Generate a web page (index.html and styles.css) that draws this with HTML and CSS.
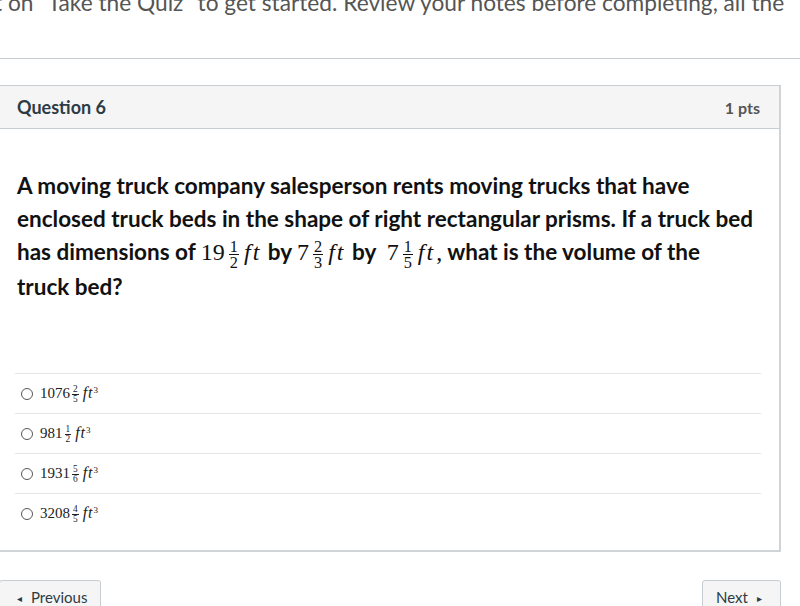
FILE: index.html
```html
<!DOCTYPE html>
<html>
<head>
<meta charset="utf-8">
<link rel="stylesheet" href="styles.css">
</head>
<body>
<div class="intro">t on "Take the Quiz" to get started. Review your notes before completing, all the</div>
<div class="rule"></div>
<div class="card">
  <div class="card-head">
    <span class="q-title">Question 6</span>
    <span class="q-pts">1 pts</span>
  </div>
  <div class="card-body">
    <p class="q-text">A moving truck company salesperson rents moving trucks that have enclosed truck beds in the shape of right rectangular prisms. If a truck bed has dimensions of <span class="m">19<span class="frac"><span class="num">1</span><span class="den">2</span></span><i class="v">ft</i></span> by <span class="m">7<span class="frac"><span class="num">2</span><span class="den">3</span></span><i class="v">ft</i></span> by &nbsp;<span class="m">7<span class="frac"><span class="num">1</span><span class="den">5</span></span><i class="v">ft</i>,</span> what is the volume of the truck bed?</p>
    <div class="answers">
      <label class="answer"><span class="radio"></span><span class="am">1076<span class="frac"><span class="num">2</span><span class="den">5</span></span><i class="v">ft</i><sup>3</sup></span></label>
      <label class="answer"><span class="radio"></span><span class="am">981<span class="frac"><span class="num">1</span><span class="den">2</span></span><i class="v">ft</i><sup>3</sup></span></label>
      <label class="answer"><span class="radio"></span><span class="am">1931<span class="frac"><span class="num">5</span><span class="den">6</span></span><i class="v">ft</i><sup>3</sup></span></label>
      <label class="answer"><span class="radio"></span><span class="am">3208<span class="frac"><span class="num">4</span><span class="den">5</span></span><i class="v">ft</i><sup>3</sup></span></label>
    </div>
  </div>
</div>
<div class="nav">
  <button class="btn prev"><span class="arrow">&#9666;</span>Previous</button>
  <button class="btn next">Next<span class="arrow r">&#9656;</span></button>
</div>
</body>
</html>
```

FILE: styles.css
```css
* { box-sizing: border-box; }
html, body { margin: 0; padding: 0; background: #fff; overflow: hidden; }
body {
  width: 800px;
  height: 606px;
  font-family: Lato, "Liberation Sans", sans-serif;
  color: #2d3b45;
}
.intro {
  font-size: 22.7px;
  line-height: 28px;
  color: #555;
  margin-top: -11px;
  margin-left: -6px;
  white-space: nowrap;
  height: 28px;
}
.rule {
  margin-top: 41px;
  height: 1px;
  background: #c7cdd1;
}
.card {
  margin-top: 26px;
  margin-left: -1px;
  width: 782px;
  border: 1px solid #c7cdd1;
  border-right-width: 2px;
  border-bottom-width: 2px;
  border-right-color: #d0d4d7;
  border-bottom-color: #d0d4d7;
}
.card-head {
  height: 43px;
  background: #f5f5f5;
  border-bottom: 1px solid #c7cdd1;
  display: flex;
  align-items: center;
  justify-content: space-between;
  padding: 0 19px 0 17px;
}
.q-title { font-weight: 700; font-size: 18px; color: #2d3b45; }
.q-pts { font-weight: 700; font-size: 16px; color: #555; }
.card-body { padding: 40px 0 17px 0; }
.q-text {
  margin: 0;
  padding: 0 23px 0 17px;
  font-size: 22.5px;
  font-weight: 700;
  line-height: 33px;
  color: #111;
}
.m {
  font-family: "Liberation Serif", "DejaVu Serif", serif;
  font-weight: 400;
  font-size: 24px;
  line-height: 1;
}
.v { font-style: italic; margin-left: 4px; letter-spacing: 2px; margin-right: 1px; }
.frac {
  display: inline-block;
  vertical-align: middle;
  text-align: center;
  font-size: 0.68em;
  line-height: 0.95;
  margin: 0 1px 0 4px;
}
.num, .den { display: block; }
.num { border-bottom: 1px solid currentColor; padding: 0 1px 0; }
.answers {
  margin: 70px 18px 0 15px;
}
.answer {
  display: flex;
  align-items: center;
  height: 40px;
  border-top: 1px solid #e6e7e8;
  padding-left: 6px;
}
.radio {
  width: 12px;
  height: 12px;
  border: 1px solid #555;
  border-radius: 50%;
  margin-right: 7px;
}
.am {
  font-family: "Liberation Serif", "DejaVu Serif", serif;
  font-size: 15px;
  color: #222;
}
.am .frac { font-size: 0.62em; margin-left: 2px; }
.am .v { margin-left: 3px; font-size: 16px; letter-spacing: 1px; margin-right: 0; }
.am sup { font-size: 0.6em; vertical-align: 0.6em; line-height: 0; }
.nav {
  display: flex;
  justify-content: space-between;
  margin-top: 28px;
  width: 781px;
}
.btn {
  font-family: Lato, "Liberation Sans", sans-serif;
  font-size: 15px;
  color: #2d3b45;
  background: #f5f5f5;
  border: 1px solid #c7cdd1;
  border-radius: 3px;
  height: 38px;
  padding: 7px 14px 0 17px;
  display: flex;
  align-items: flex-start;
}
.prev { margin-left: -1px; width: 102px; }
.next { width: 79px; padding-left: 13px; }
.arrow { font-size: 10px; margin-right: 9px; line-height: 20px; }
.arrow.r { margin-right: 0; margin-left: 9px; }
```
